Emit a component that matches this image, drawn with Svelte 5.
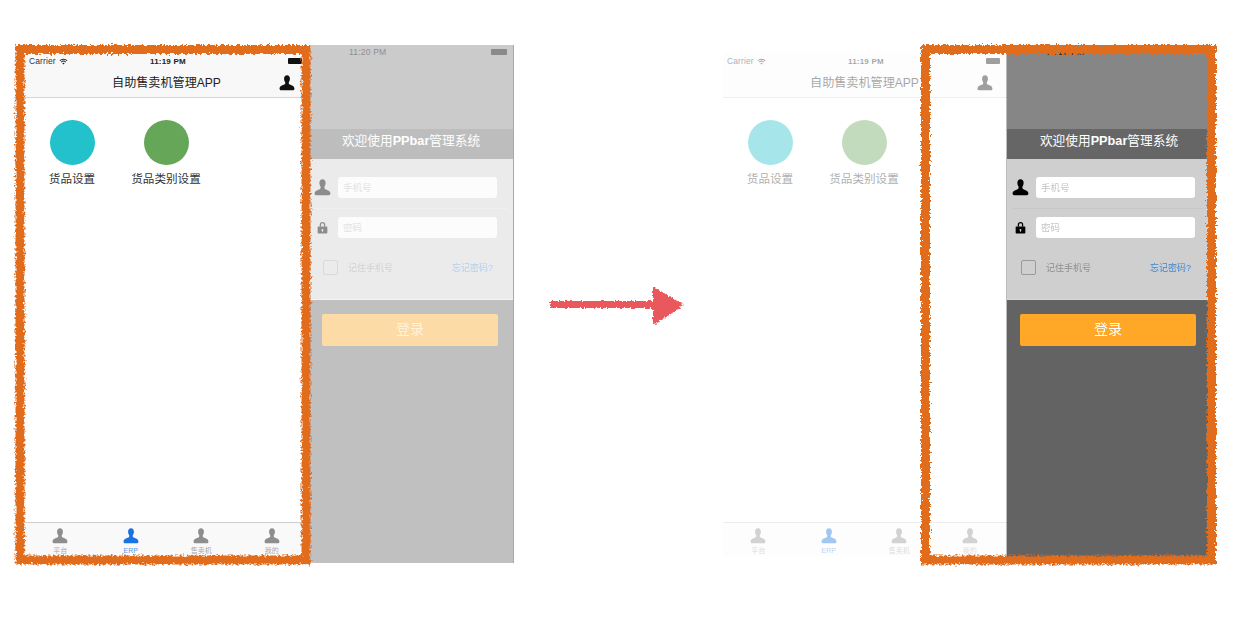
<script>
    const shortcuts = [
        { label: '货品设置', color: '#22c1cb' },
        { label: '货品类别设置', color: '#66a659' }
    ];
    const tabs = [
        { label: '平台' },
        { label: 'ERP', active: true },
        { label: '售卖机' },
        { label: '我的' }
    ];
    const person = 'M12 .5c-2.8 0-4.4 2-4.4 5 0 2.2.8 4 1.7 5.2v2.1c0 .7-.4 1.1-1.2 1.5C5.4 15.6.8 16.3.8 20.6c0 1.2.8 2.4 2.4 2.4h17.6c1.6 0 2.4-1.2 2.4-2.4 0-4.3-4.6-5-7.3-6.3-.8-.4-1.2-.8-1.2-1.5v-2.1c.9-1.2 1.7-3 1.7-5.2 0-3-1.6-5-4.4-5z';
</script>

{#snippet personIcon(cls)}
    <svg class={cls} viewBox="0 0 24 24"><path d={person} fill="currentColor" /></svg>
{/snippet}

{#snippet battery()}
    <span class="battery"></span>
{/snippet}

{#snippet app()}
    <div class="app">
        <header class="app-head">
            <div class="status">
                <span class="carrier">Carrier</span>
                <svg class="wifi" viewBox="0 0 12 9">
                    <path d="M6 8.6 4.4 6.8a2.3 2.3 0 0 1 3.2 0zM3.4 5.7a3.8 3.8 0 0 1 5.2 0l.8-.9a5 5 0 0 0-6.8 0zM1.6 3.8a6.3 6.3 0 0 1 8.8 0l.9-.9a7.6 7.6 0 0 0-10.6 0z" fill="currentColor" />
                </svg>
                <span class="clock">11:19 PM</span>
                {@render battery()}
            </div>
            <div class="nav">
                <h1>自助售卖机管理APP</h1>
                {@render personIcon('nav-user')}
            </div>
        </header>
        <main class="grid">
            {#each shortcuts as item}
                <div class="shortcut">
                    <span class="dot" style:background={item.color}></span>
                    <span class="shortcut-label">{item.label}</span>
                </div>
            {/each}
        </main>
        <footer class="tabs">
            {#each tabs as tab}
                <div class="tab" class:active={tab.active}>
                    {@render personIcon('tab-icon')}
                    <span>{tab.label}</span>
                </div>
            {/each}
        </footer>
    </div>
{/snippet}

{#snippet login()}
    <div class="login">
        <div class="login-top">
            <div class="login-status">
                <span class="login-clock">11:20 PM</span>
                {@render battery()}
            </div>
        </div>
        <div class="login-title">欢迎使用<b>PPbar</b>管理系统</div>
        <form class="login-form" onsubmit={(e) => e.preventDefault()}>
            <div class="field">
                <span class="field-icon">{@render personIcon('field-user')}</span>
                <input type="text" placeholder="手机号" />
            </div>
            <div class="rule"></div>
            <div class="field">
                <span class="field-icon">
                    <svg class="lock" viewBox="0 0 12 14">
                        <path d="M3 6V4a3 3 0 0 1 6 0v2H7.6V4a1.6 1.6 0 0 0-3.2 0v2z" fill="currentColor" />
                        <path fill-rule="evenodd" d="M1.5 6h9a.8.8 0 0 1 .8.8v6a.8.8 0 0 1-.8.8h-9a.8.8 0 0 1-.8-.8v-6A.8.8 0 0 1 1.5 6zM6 8.6a1 1 0 0 0-.5 1.9v1.2h1v-1.2A1 1 0 0 0 6 8.6z" fill="currentColor" />
                    </svg>
                </span>
                <input type="password" placeholder="密码" />
            </div>
            <div class="options">
                <span class="check"></span>
                <span class="remember">记住手机号</span>
                <span class="forgot">忘记密码?</span>
            </div>
        </form>
        <div class="login-foot">
            <button type="button">登录</button>
        </div>
    </div>
{/snippet}

<div class="stage">
    <section class="scene before">
        {@render app()}
        {@render login()}
    </section>
    <section class="scene after">
        {@render app()}
        {@render login()}
    </section>

    <!-- hand drawn marks on top of the two screens -->
    <svg class="marks" viewBox="0 0 1240 619">
        <defs>
            <filter id="rough" filterUnits="userSpaceOnUse" x="0" y="0" width="1240" height="619">
                <feTurbulence type="fractalNoise" baseFrequency="0.45" numOctaves="3" seed="4" />
                <feDisplacementMap in="SourceGraphic" scale="6" xChannelSelector="R" yChannelSelector="G" />
            </filter>
            <filter id="rough-arrow" filterUnits="userSpaceOnUse" x="500" y="250" width="240" height="110">
                <feTurbulence type="fractalNoise" baseFrequency="0.5" numOctaves="2" seed="9" />
                <feDisplacementMap in="SourceGraphic" scale="5" xChannelSelector="R" yChannelSelector="G" />
            </filter>
        </defs>
        <g filter="url(#rough)" fill="none" stroke="#e06c1f" stroke-width="9">
            <rect x="20" y="49.5" width="286" height="510.5" />
            <rect x="925.5" y="49.5" width="286" height="510.5" />
        </g>
        <g filter="url(#rough-arrow)" fill="#e8585c">
            <path d="M550 301h106v7H550z" />
            <path d="M653 287c2 0 4 1 6 3l25 15-25 17c-2 1-4 2-6 2z" />
        </g>
    </svg>
</div>

<style>
    :global(body) {
        margin: 0;
        background: #fff;
    }
    .stage {
        position: relative;
        width: 1240px;
        height: 619px;
        overflow: hidden;
        font-family: "Liberation Sans", "Noto Sans CJK SC", sans-serif;
        filter: blur(0.35px);
    }
    .scene {
        position: absolute;
        top: 45px;
        display: flex;
        align-items: flex-start;
    }
    .before {
        left: 25px;
    }
    .after {
        left: 723px;
    }
    .marks {
        position: absolute;
        inset: 0;
        width: 1240px;
        height: 619px;
        pointer-events: none;
    }

    /* app screen */
    .app {
        width: 284px;
        height: 503px;
        margin-top: 8px;
        display: flex;
        flex-direction: column;
        background: #fff;
        color: #222;
    }
    .after .app {
        opacity: 0.4;
        box-shadow: inset 0 1px 0 #aaa;
    }
    .app-head {
        background: #f8f8f8;
        border-bottom: 1px solid #d6d6d6;
        height: 44px;
        flex: none;
    }
    .after .app-head {
        background: #fafafa;
    }
    .status {
        height: 16px;
        display: flex;
        align-items: center;
        padding: 0 7px 0 4px;
        font-size: 8.5px;
        position: relative;
    }
    .carrier {
        color: #333;
        letter-spacing: 0.1px;
    }
    .wifi {
        width: 9px;
        height: 7px;
        margin-left: 3px;
    }
    .clock {
        position: absolute;
        left: 125px;
        font-weight: 700;
        font-size: 8px;
        letter-spacing: 0.2px;
    }
    .battery {
        width: 14px;
        height: 6px;
        margin-left: auto;
        background: #111;
        border-radius: 1px;
    }
    .nav {
        height: 28px;
        display: flex;
        align-items: center;
        justify-content: flex-end;
        padding-right: 14px;
        position: relative;
    }
    .nav h1 {
        position: absolute;
        left: 0;
        right: 1px;
        margin: 0;
        text-align: center;
        font-size: 12.1px;
        font-weight: 400;
        line-height: 26px;
    }
    .nav-user {
        width: 16px;
        height: 16px;
        color: #111;
    }
    .grid {
        flex: 1;
        display: flex;
        align-items: flex-start;
        padding-top: 22px;
    }
    .shortcut {
        width: 94px;
        display: flex;
        flex-direction: column;
        align-items: center;
        gap: 6px;
    }
    .dot {
        width: 45px;
        height: 45px;
        border-radius: 50%;
    }
    .shortcut-label {
        font-size: 11.6px;
        line-height: 16px;
        color: #333;
        white-space: nowrap;
    }
    .tabs {
        height: 33px;
        flex: none;
        display: flex;
        padding-right: 2px;
        background: #f9f9f9;
        border-top: 1px solid #cfcfcf;
    }
    .tab {
        flex: 1;
        display: flex;
        flex-direction: column;
        align-items: center;
        padding-top: 5px;
        color: #8e8e8e;
        font-size: 7px;
        line-height: 8px;
        min-width: 0;
    }
    .tab span {
        opacity: 0.75;
    }
    .tab.active {
        color: #1a73e0;
    }
    .tab-icon {
        width: 16px;
        height: 16px;
        margin-bottom: 3px;
    }

    /* login screen */
    .login {
        width: 204px;
        height: 518px;
        display: flex;
        flex-direction: column;
        flex: none;
    }
    .before .login {
        box-shadow: 1px 0 0 #a9a9a9;
    }
    .after .login {
        box-shadow: -1px 0 0 #8f8f8f;
    }
    .login-top {
        height: 84px;
        background: #cbcbcb;
        color: #8f8f8f;
    }
    .after .login-top {
        background: #868686;
        color: #222;
    }
    .login-status {
        height: 14px;
        display: flex;
        align-items: center;
        padding: 0 6px 0 40px;
        font-size: 8.5px;
    }
    .login-clock {
        letter-spacing: 0.2px;
    }
    .login-status .battery {
        width: 16px;
        background: #8a8a8a;
    }
    .login-title {
        height: 30px;
        line-height: 24px;
        text-align: center;
        font-size: 12.7px;
        color: #fff;
        background: #bdbdbd;
    }
    .after .login-title {
        background: #666;
    }
    .login-form {
        height: 141px;
        box-sizing: border-box;
        margin: 0;
        padding-top: 18px;
        background: #ebebeb;
        color: #8c8c8c;
        border-bottom: 1px solid #f4f4f4;
    }
    .after .login-form {
        background: #cfcfcf;
        color: #000;
        border-bottom-color: #dadada;
    }
    .field {
        display: flex;
        align-items: center;
        height: 21px;
        padding-right: 16px;
    }
    .rule {
        height: 1px;
        margin: 9.5px 6px 8.5px;
        background: #f0f0f0;
    }
    .after .rule {
        background: #c8c8c8;
    }
    .field-icon {
        width: 29px;
        flex: none;
        display: flex;
        justify-content: center;
        padding-right: 2px;
        box-sizing: border-box;
    }
    .field-user {
        width: 17px;
        height: 17px;
    }
    .lock {
        width: 11px;
        height: 13px;
    }
    input {
        flex: 1;
        min-width: 0;
        height: 21px;
        box-sizing: border-box;
        border: none;
        border-radius: 3px;
        padding: 0 0 0 5px;
        background: #fff;
        font: 9.5px "Liberation Sans", "Noto Sans CJK SC", sans-serif;
        outline: none;
    }
    input::placeholder {
        color: #c4c4c4;
    }
    .before input {
        opacity: 0.85;
    }
    .before input::placeholder {
        color: #e2e2e2;
    }
    .options {
        display: flex;
        align-items: center;
        margin-top: 22px;
        padding: 0 20px 0 14px;
        font-size: 9px;
    }
    .check {
        width: 13px;
        height: 13px;
        border: 1px solid #9a9a9a;
        border-radius: 2px;
    }
    .before .check {
        border-color: #d8d8d8;
    }
    .remember {
        margin-left: 10px;
        color: #8f8f8f;
    }
    .before .remember {
        color: #d2d2d2;
    }
    .forgot {
        margin-left: auto;
        color: #3f87d6;
    }
    .before .forgot {
        color: #b5cfee;
    }
    .login-foot {
        flex: 1;
        padding: 14px 15px 0 13px;
        background: #c0c0c0;
    }
    .after .login-foot {
        background: #636363;
    }
    button {
        display: block;
        width: 100%;
        height: 32px;
        border: none;
        border-radius: 2px;
        padding: 0 0 4px;
        background: #fddba6;
        color: #fff;
        font: 14px "Liberation Sans", "Noto Sans CJK SC", sans-serif;
    }
    .before button {
        color: #fff3de;
    }
    .after button {
        background: #ffa726;
    }
</style>
